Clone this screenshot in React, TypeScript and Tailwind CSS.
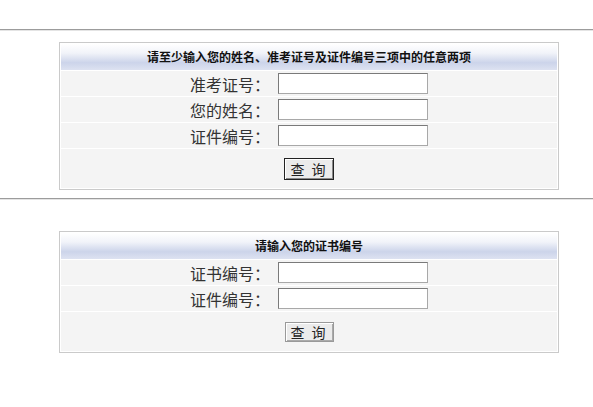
import React from 'react';

const cjk = { fontFamily: '"Noto Sans CJK SC", "Noto Sans", sans-serif' };

const Divider: React.FC = () => (
    <div className="h-[2px] w-full border-t border-t-[#9c9c9c] border-b border-b-[#e4e4e4]" />
);

const Row: React.FC<{ label: string }> = ({ label }) => (
    <div className="flex items-center h-[25px] bg-[#f4f4f4]">
        <div className="w-[209px] text-right text-[16px] leading-none text-[#333]" style={cjk}>
            {label}
        </div>
        <input
            type="text"
            className="ml-[8px] w-[150px] h-[21px] bg-white border border-[#7a7a7a] border-b-[#a8a8a8] border-r-[#a8a8a8] outline-none"
        />
    </div>
);

const QueryBox: React.FC<{ title: string; labels: string[]; primary?: boolean }> = ({ title, labels, primary }) => (
    <div className="ml-[59px] w-[500px] border border-[#cacaca] bg-white p-[1px] flex flex-col gap-[1px]">
        {/* header */}
        <div
            className="h-[26px] flex items-center justify-center text-[12px] font-bold text-[#111] bg-[linear-gradient(to_bottom,#ffffff_0%,#f1f3f9_35%,#ccd4ea_72%,#dde2f1_100%)]"
            style={cjk}
        >
            {title}
        </div>
        {labels.map((l) => (
            <Row key={l} label={l} />
        ))}
        <div className="h-[39px] bg-[#f4f4f4] flex items-center justify-center">
            <button
                className={
                    primary
                        ? 'w-[50px] h-[22px] border border-[#222] bg-[#ebebeb] shadow-[inset_1px_1px_0_#fff,inset_-1px_-1px_0_#888] text-[14px] leading-none text-[#222] tracking-[2px]'
                        : 'w-[49px] h-[20px] border border-[#999] bg-[#ebebeb] shadow-[inset_1px_1px_0_#fff,inset_-1px_-1px_0_#aaa] text-[14px] leading-none text-[#222] tracking-[2px]'
                }
                style={cjk}
            >
                查 询
            </button>
        </div>
    </div>
);

const App: React.FC = () => {
    return (
        <div className="w-[593px] h-[407px] bg-white overflow-hidden">
            <div className="pt-[29px]">
                <Divider />
            </div>
            <div className="pt-[11px]">
                <QueryBox
                    title="请至少输入您的姓名、准考证号及证件编号三项中的任意两项"
                    labels={['准考证号：', '您的姓名：', '证件编号：']}
                    primary
                />
            </div>
            <div className="pt-[8px]">
                <Divider />
            </div>
            <div className="pt-[31px]">
                <QueryBox title="请输入您的证书编号" labels={['证书编号：', '证件编号：']} />
            </div>
        </div>
    );
};

export default App;
